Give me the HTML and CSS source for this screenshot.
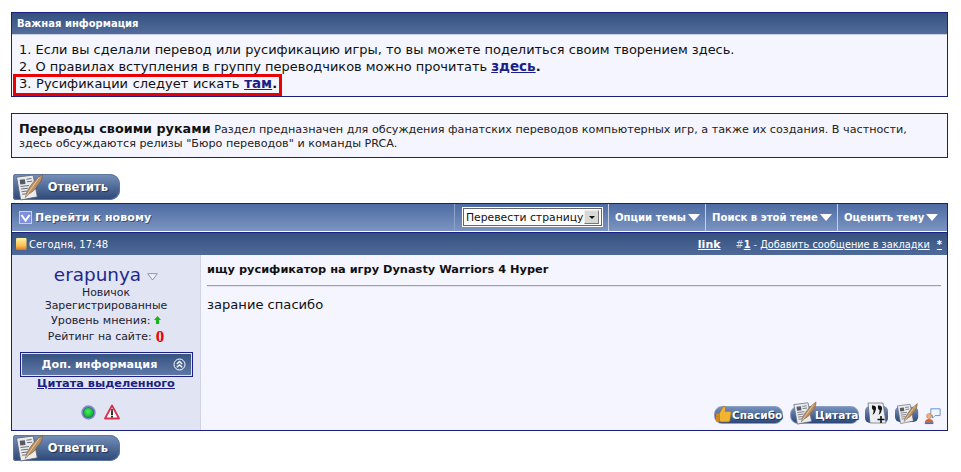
FILE: index.html
```html
<!DOCTYPE html>
<html lang="ru">
<head>
<meta charset="utf-8">
<title>Переводы своими руками</title>
<link rel="stylesheet" href="styles.css">
</head>
<body>
<svg class="defs" width="0" height="0" aria-hidden="true">
  <defs>
    <linearGradient id="btnBlue" x1="0" y1="0" x2="0" y2="1"><stop offset="0" stop-color="#7b96bf"/><stop offset=".55" stop-color="#4d6894"/><stop offset="1" stop-color="#2d4877"/></linearGradient>
    <radialGradient id="greenDot" cx=".45" cy=".4" r=".6"><stop offset="0" stop-color="#4cf05c"/><stop offset="1" stop-color="#06b82a"/></radialGradient>
    <symbol id="paper" viewBox="0 0 30 27">
      <path d="M3 4 L19 2 L23 23 L7 26 Z" fill="#e9ebef" stroke="#5f646d" stroke-width=".8"/>
      <path d="M6 6.500 L11 6 L11.600 10.500 L6.600 11 Z" fill="#555a63"/>
      <path d="M12.500 6 L17.500 5.400 M13 8.500 L18 7.900 M6.800 13 L15 12 M7.300 15.500 L14 14.700 M7.800 18 L13 17.400 M8.300 20.500 L12.500 20" stroke="#6e727b" stroke-width="1"/>
      <path d="M11.500 23.500 L13 18 Q18 8 28 1 Q28 8 23 12 Q21 17 15 20 Z" fill="#b98f63" stroke="#7b5c3c" stroke-width=".6"/>
      <path d="M12.300 22 L25 4" stroke="#e7d0ad" stroke-width=".9"/>
    </symbol>
  </defs>
</svg>

<section class="panel notice">
  <h2 class="notice-head">Важная информация</h2>
  <div class="notice-body">
    <div>1. Если вы сделали перевод или русификацию игры, то вы можете поделиться своим творением здесь.</div>
    <div>2. О правилах вступления в группу переводчиков можно прочитать <a class="strong-link" href="#">здесь</a><b>.</b></div>
    <div class="marked">3. Русификации следует искать <a class="strong-link" href="#">там</a><b>.</b></div>
  </div>
</section>

<section class="panel forum-desc">
  <b class="forum-name">Переводы своими руками</b> Раздел предназначен для обсуждения фанатских переводов компьютерных игр, а также их создания. В частности,<br>здесь обсуждаются релизы "Бюро переводов" и команды PRCA.
</section>

<a class="reply-btn top" href="#">
  <svg class="reply-pen" width="32" height="28"><use href="#paper"/></svg>
  <span>Ответить</span>
</a>

<section class="thread">
  <div class="toolbar">
    <div class="tool-new">
      <svg class="new-icon" width="13" height="13" viewBox="0 0 13 13"><rect x=".5" y=".5" width="12" height="12" fill="#7f8fe0" stroke="#c8d0f4"/><path d="M2.500 4 L6.500 9.500 L10.500 4" fill="none" stroke="#fff" stroke-width="2"/></svg>
      Перейти к новому
    </div>
    <div class="tool-translate">
      <div class="fake-select"><span>Перевести страницу</span><i class="select-arrow"></i></div>
    </div>
    <div class="tool-item item-options">Опции темы<i class="tri"></i></div>
    <div class="tool-item item-search">Поиск в этой теме<i class="tri"></i></div>
    <div class="tool-item item-rate">Оценить тему<i class="tri"></i></div>
  </div>

  <div class="post-head">
    <div class="post-date">
      <svg width="11" height="12" viewBox="0 0 11 12"><defs><linearGradient id="doc" x1="0" y1="0" x2="0" y2="1"><stop offset="0" stop-color="#fff2a8"/><stop offset=".65" stop-color="#f8c04c"/><stop offset="1" stop-color="#e4702c"/></linearGradient></defs><rect width="10.500" height="12" rx="1" fill="url(#doc)"/></svg>
      Сегодня, 17:48
    </div>
    <div class="post-links">
      <a class="link-bold" href="#">link</a>
      <span class="post-num">#<a href="#"><b>1</b></a> - <a href="#">Добавить сообщение в закладки</a></span>
      <a class="star" href="#">*</a>
    </div>
  </div>

  <div class="post">
    <aside class="author">
      <div class="author-name">
        <a href="#">erapunya</a>
        <svg width="11" height="8" viewBox="0 0 11 8"><path d="M.7 .7 H10.300 L5.500 7 Z" fill="#f4f5fb" stroke="#8a93ad"/></svg>
      </div>
      <div class="author-rank">Новичок</div>
      <div class="author-group">Зарегистрированные</div>
      <div class="author-rep">Уровень мнения:
        <svg width="7" height="8" viewBox="0 0 9 10"><path d="M4.500 0 L9 5 H6.500 V10 H2.500 V5 H0 Z" fill="#18b418"/></svg>
      </div>
      <div class="author-rating"><span>Рейтинг на сайте:</span><b>0</b></div>
      <div class="more-info">
        <span>Доп. информация</span>
        <svg class="more-icon" width="13" height="13" viewBox="0 0 13 13"><circle cx="6.500" cy="6.500" r="5.500" fill="none" stroke="#fff"/><path d="M3.800 6 L6.500 3.500 L9.200 6 M3.800 9.300 L6.500 6.800 L9.200 9.300" fill="none" stroke="#fff" stroke-width="1.300"/></svg>
      </div>
      <a class="quote-selected" href="#">Цитата выделенного</a>
      <div class="author-status">
        <svg width="15" height="15" viewBox="0 0 15 15"><circle cx="7.500" cy="7.500" r="7.200" fill="#7c8ec4"/><circle cx="7.500" cy="7.500" r="5.600" fill="#4a5f9c"/><circle cx="7.500" cy="7.500" r="4.600" fill="url(#greenDot)"/></svg>
        <svg width="16" height="16" viewBox="0 0 16 16"><path d="M8 1.500 L15 14.500 H1 Z" fill="#fff" stroke="#d9304c" stroke-width="1.800" stroke-linejoin="round"/><path d="M8 5 L8.500 11 H7.500 Z" fill="#222" stroke="#222"/><rect x="7" y="12" width="2" height="1.500" fill="#222"/></svg>
      </div>
    </aside>
    <div class="post-main">
      <h3 class="post-title">ищу русификатор на игру Dynasty Warriors 4 Hyper</h3>
      <hr class="post-rule">
      <p class="post-text">зарание спасибо</p>
      <div class="post-actions">
        <a class="pill thanks" href="#">
          <svg width="17" height="18" viewBox="0 0 16 17"><path d="M1 8 H4 V16 H1 Z" fill="#d98a1c"/><path d="M4 8 L8 1 Q10 1 10 3.500 L9.500 6 H14.500 Q16 7 15 9 L14 15 Q13.500 16 12 16 H6 L4 15 Z" fill="#f0b432" stroke="#a8681a" stroke-width=".6"/></svg>
          <span>Спасибо</span>
        </a>
        <a class="pill quote" href="#">
          <svg class="pill-pen" width="27" height="24"><use href="#paper"/></svg>
          <span>Цитата</span>
        </a>
        <a class="icon-btn" href="#">
          <svg width="23" height="23" viewBox="0 0 23 23"><rect y="4" width="23" height="17" rx="5" fill="url(#btnBlue)"/><path d="M3 1 H18 L21 21 H5 Z" fill="#eceef2" stroke="#5f646d" stroke-width=".7"/><path d="M7 3.500 Q11.500 3 11 7 Q10.500 11 7.500 13 Q9 9.500 8.500 8 Q6.500 7.500 7 3.500 Z M13 3.500 Q17.500 3 17 7 Q16.500 11 13.500 13 Q15 9.500 14.500 8 Q12.500 7.500 13 3.500 Z" fill="#111"/><path d="M16 14 V21 M12.500 17.500 H19.500" stroke="#111" stroke-width="1.600"/></svg>
        </a>
        <a class="icon-btn pen-btn" href="#">
          <svg width="24" height="23" viewBox="0 0 30 27"><rect y="5" width="29" height="19" rx="6" fill="url(#btnBlue)"/><use href="#paper" width="30" height="27"/></svg>
        </a>
        <a class="icon-btn" href="#">
          <svg width="17" height="18" viewBox="0 0 20 20"><path d="M8 1.500 H19 V9.500 H13 L10 12.500 V9.500 H8 Z" fill="#eef4fc" stroke="#5f86c0"/><circle cx="6" cy="10" r="3" fill="#eeb07a" stroke="#a8643a" stroke-width=".5"/><path d="M1 18 Q1 13.500 6 13.500 Q11 13.500 11 18 Z" fill="#e0622a"/><path d="M1 17.500 H11 V19.500 H1 Z" fill="#3f70c8"/></svg>
        </a>
      </div>
    </div>
  </div>
</section>

<a class="reply-btn bottom" href="#">
  <svg class="reply-pen" width="32" height="28"><use href="#paper"/></svg>
  <span>Ответить</span>
</a>
</body>
</html>
```

FILE: styles.css
```css
* { box-sizing: border-box; }
html, body { margin: 0; background: #fff; }
body {
  width: 961px;
  height: 472px;
  overflow: hidden;
  padding: 12px 13px 0 11px;
  font-family: "DejaVu Sans", Verdana, sans-serif;
  font-size: 12px;
  color: #111;
}
.defs { position: absolute; }
a { color: #1c1f85; }

.panel { border: 1px solid #1a1f80; background: #f5f5ff; }
.notice { height: 85px; }
.notice-head {
  margin: 0;
  height: 22px;
  padding: 0 0 0 5px;
  border-bottom: 1px solid #c9d0e2;
  background: linear-gradient(#34517f, #526c9c);
  color: #fff;
  font-size: 10px;
  font-weight: 700;
  line-height: 21px;
}
.notice-body {
  padding: 7px 0 0 7px;
  font-size: 12.960px;
  line-height: 16px;
}
.marked {
  width: 269px;
  height: 22px;
  margin: -1px 0 0 -6px;
  padding: 0 0 0 3px;
  border: 3px solid #ea0000;
  line-height: 12px;
  word-spacing: .6px;
}
.strong-link { font-weight: 700; font-size: 13.500px; }

.forum-desc {
  height: 45px;
  margin-top: 16px;
  padding: 8px 7px 0;
  font-size: 11.200px;
  line-height: 14px;
  color: #222;
}
.forum-name { font-size: 12.770px; line-height: 14px; color: #111; }

.reply-btn {
  display: flex;
  align-items: center;
  width: 107px;
  height: 26px;
  padding-right: 12px;
  justify-content: flex-end;
  border-radius: 3px 10px 10px 3px;
  background: linear-gradient(#7591bb, #4d6894 55%, #2d4877);
  box-shadow: inset 0 0 0 1px #5d779f;
  color: #fff;
  font-size: 11.500px;
  font-weight: 700;
  text-decoration: none;
  text-shadow: 1px 1px 1px #1d2f50;
  position: relative;
}
.reply-pen { position: absolute; left: 0; top: -1px; }
.reply-btn.top { margin: 16px 0 0 2px; }
.reply-btn.bottom { margin: 4px 0 0 2px; }

.thread { margin-top: 3px; border: 1px solid #1a1f80; }
.toolbar {
  display: flex;
  height: 28px;
  border-bottom: 1px solid #fff;
  background: linear-gradient(#4d6ba4, #7c95c0);
  color: #fff;
  font-weight: 700;
}
.tool-new {
  flex: 1;
  display: flex;
  align-items: center;
  gap: 3px;
  padding-left: 7px;
  font-size: 11px;
  letter-spacing: .1px;
  text-shadow: 1px 1px 0 #3a4f7c;
}
.tool-translate {
  width: 155px;
  padding: 3px 0 0 7px;
  border-left: 1px solid #8ea3c9;
  border-right: 1px solid #c4d0e6;
}
.fake-select {
  display: flex;
  align-items: center;
  justify-content: space-between;
  width: 141px;
  height: 20px;
  padding: 0 3px 0 3px;
  background: #fff;
  border: 1px solid #fff;
  outline: 1px solid #666;
  outline-offset: -2px;
  color: #111;
  font-size: 10.800px;
  font-weight: 400;
  white-space: nowrap;
}
.select-arrow {
  display: flex;
  align-items: center;
  justify-content: center;
  width: 15px;
  height: 14px;
  background: #d8d8d4;
  border: 1px solid #777;
  border-top-color: #eee;
  border-left-color: #eee;
}
.select-arrow::after {
  content: "";
  border: 3px solid transparent;
  border-top: 3px solid #111;
  border-bottom: 0;
}
.tool-item {
  display: flex;
  align-items: center;
  gap: 2px;
  padding-left: 6px;
  border-right: 1px solid #c4d0e6;
  font-size: 10.100px;
  white-space: nowrap;
}
.item-options { width: 97px; }
.item-search { width: 132px; }
.item-rate { width: 109px; border-right: 0; }
.tri { border: 6px solid transparent; border-top: 7px solid #fff; border-bottom: 0; }

.post-head {
  display: flex;
  align-items: center;
  justify-content: space-between;
  height: 23px;
  padding: 0 5px 0 4px;
  border-top: 1px solid #1a1f80;
  background: linear-gradient(#35527f, #4f6a99);
  color: #fff;
  font-size: 10px;
}
.post-head a { color: #fff; }
.post-date { display: flex; align-items: center; gap: 2px; }
.post-links { display: flex; align-items: center; }
.link-bold { font-weight: 700; font-size: 11px; margin-right: 15px; }
.post-num { color: #d6deee; font-size: 9.750px; }
.star { margin-left: 7px; font-weight: 700; }

.post { display: flex; height: 175px; background: #f5f5ff; }
.author {
  width: 189px;
  flex: none;
  display: flex;
  flex-direction: column;
  align-items: center;
  padding: 11px 0 0;
  background: #e1e4f2;
  border-right: 1px solid #cfd3e4;
  font-size: 10.900px;
  line-height: 13px;
  color: #223;
}
.author-name { display: flex; align-items: center; gap: 6px; font-size: 18.400px; line-height: 18px; }
.author-name a { text-decoration: none; color: #23278f; }
.author-name svg { margin-top: 4px; }
.author-rank { margin-top: 2px; }
.author-rep { margin-top: 1px; line-height: 16px; height: 16px; font-size: 11.200px; }
.author-rating { display: flex; align-items: center; gap: 4px; line-height: 16px; height: 16px; }
.author-rating b { color: #ee0000; font-size: 17px; line-height: 16px; font-family: "Liberation Serif", serif; }
.more-info {
  display: flex;
  align-items: center;
  justify-content: space-between;
  width: 173px;
  height: 25px;
  margin-top: 7px;
  padding: 0 6px 0 21px;
  border: 1px solid #1c1f85;
  outline: 1px solid #e1e4f2;
  outline-offset: -2px;
  background: linear-gradient(#34517f, #6079a8);
  color: #fff;
  font-size: 11.200px;
  font-weight: 700;
}
.quote-selected { font-size: 11.300px; font-weight: 700; line-height: 14px; }
.author-status { display: flex; align-items: center; gap: 8px; margin: 13px 12px 0 0; }

.post-main { flex: 1; display: flex; flex-direction: column; padding: 0 6px 0 6px; min-width: 0; }
.post-title { margin: 6px 0 0; font-size: 11.360px; font-weight: 700; line-height: 16px; color: #111; }
.post-rule { width: 100%; margin: 8px 0 0; border: 0; border-top: 1px solid #9a9fb0; border-bottom: 1px solid #e4e4f0; }
.post-text { margin: 10px 0 0; font-size: 13.100px; line-height: 16px; }
.post-actions { margin-top: auto; margin-bottom: 5px; display: flex; align-items: flex-end; justify-content: flex-end; }
.pill {
  display: flex;
  align-items: center;
  height: 18px;
  margin-bottom: 1px;
  border-radius: 8px;
  border: 1px solid #8aa0c6;
  background: linear-gradient(#7591bb, #4d6894 55%, #2d4877);
  color: #fff;
  font-size: 10.500px;
  font-weight: 700;
  text-decoration: none;
  position: relative;
  text-shadow: 1px 1px 0 #24365c;
}
.thanks { width: 69px; padding-left: 17px; margin-right: 7px; }
.thanks svg { position: absolute; left: 0; top: -2px; }
.quote { width: 69px; padding-left: 24px; margin-right: 6px; }
.pill-pen { position: absolute; left: 0; top: -6px; }
.icon-btn { display: block; line-height: 0; }
.pen-btn { margin: 0 5px 0 7px; }
```
